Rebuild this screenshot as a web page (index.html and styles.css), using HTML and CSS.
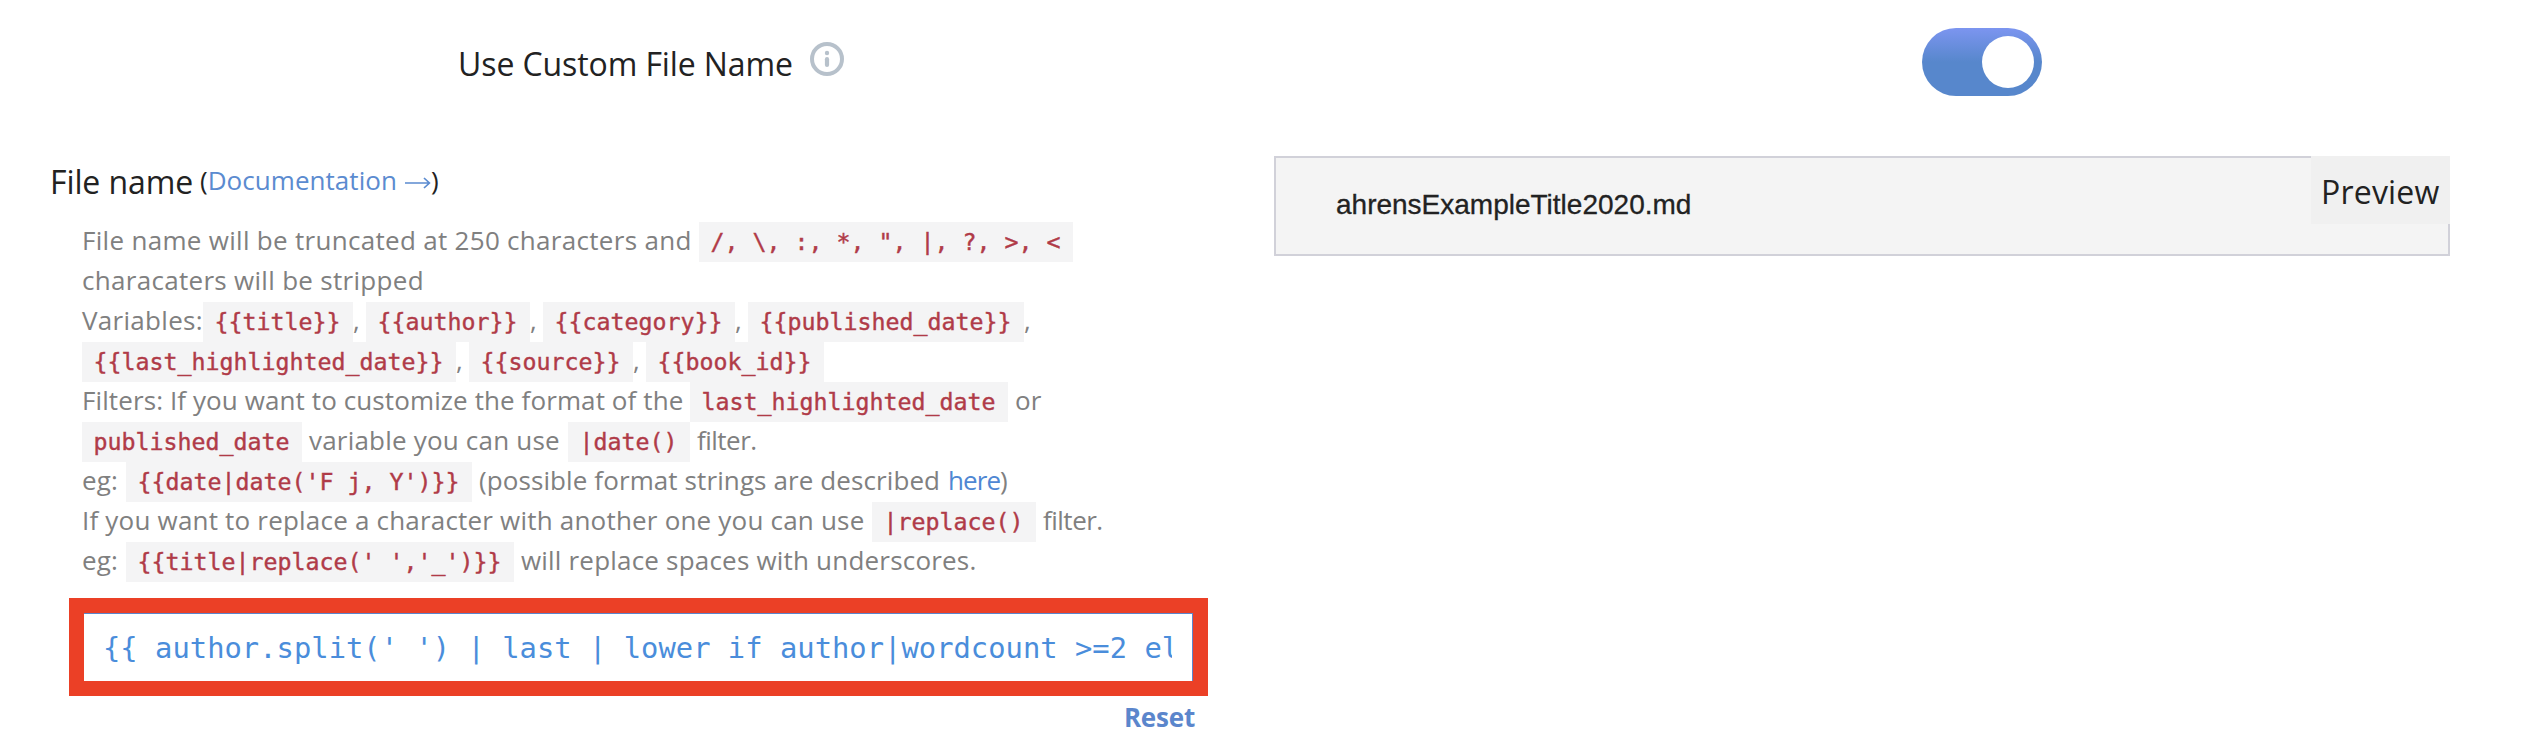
FILE: index.html
```html
<!DOCTYPE html>
<html lang="en">
<head>
<meta charset="utf-8">
<title>Custom File Name</title>
<link rel="stylesheet" href="styles.css">
</head>
<body>
<main class="settings">
  <header class="toggle-row">
    <div class="toggle-label">
      <span class="title">Use Custom File Name</span>
      <svg class="info" viewBox="0 0 34 34" fill="none" stroke="#b7c1cb">
        <circle cx="17" cy="17" r="15" stroke-width="4"/>
        <path d="M17 17.2v5.8" stroke-width="4.2" stroke-linecap="round"/>
        <circle cx="17" cy="11" r="2.2" fill="#b7c1cb" stroke="none"/>
      </svg>
    </div>
    <div class="switch"><span class="knob"></span></div>
  </header>
  <div class="columns">
    <section class="editor">
      <div class="heading"><span class="name">File name</span><span class="doc">(<a>Documentation</a><svg class="arrow" viewBox="0 0 26 14" fill="none" stroke="#5b8bd0" stroke-width="1.7"><path d="M0 7h24M19 2l5.4 5-5.4 5"/></svg>)</span></div>
      <div class="help">
        <p><span class="w-trunc loose">File name will be truncated at 250 characters and</span><code>/, \, :, *, ", |, ?, &gt;, &lt;</code></p>
        <p><span class="loose">characaters will be stripped</span></p>
        <p><span class="w-vars loose">Variables:</span><code>{{title}}</code><span class="comma">,</span><code>{{author}}</code><span class="comma">,</span><code>{{category}}</code><span class="comma">,</span><code>{{published_date}}</code><span class="comma">,</span></p>
        <p><code>{{last_highlighted_date}}</code><span class="comma">,</span><code>{{source}}</code><span class="comma">,</span><code>{{book_id}}</code></p>
        <p><span class="w-filters tight">Filters: If you want to customize the format of the</span><code>last_highlighted_date</code><span class="after">or</span></p>
        <p><code>published_date</code><span class="w-variable after">variable you can use</span><code>|date()</code><span class="after filter">filter.</span></p>
        <p><span class="w-eg">eg:</span><code>{{date|date('F j, Y')}}</code><span class="w-possible after tight">(possible format strings are described</span><a class="here">here</a><span>)</span></p>
        <p><span class="w-replace">If you want to replace a character with another one you can use</span><code>|replace()</code><span class="after filter">filter.</span></p>
        <p><span class="w-eg">eg:</span><code>{{title|replace(' ','_')}}</code><span class="after">will replace spaces with underscores.</span></p>
      </div>
      <div class="field"><div class="input"><span class="value">{{ author.split(' ') | last | lower if author|wordcount &gt;=2 el</span></div></div>
      <a class="reset">Reset</a>
    </section>
    <section class="preview">
      <span class="file">ahrensExampleTitle2020.md</span>
      <span class="badge">Preview</span>
    </section>
  </div>
</main>
</body>
</html>
```
FILE: styles.css
```css
* { box-sizing: border-box; }
body {
  margin: 0;
  background: #fff;
  color: #222;
  font-family: "Open Sans", "Noto Sans", sans-serif;
}
.settings { width: 2536px; height: 742px; overflow: hidden; }

.toggle-row { display: flex; height: 156px; }
.toggle-label { display: flex; width: 1922px; padding-left: 458px; }
.title {
  width: 352px;
  padding-top: 42px;
  font-size: 32px;
  line-height: 44px;
  letter-spacing: -0.1px;
  white-space: nowrap;
}
.info { width: 34px; height: 34px; margin-top: 42px; }
.switch {
  display: flex;
  justify-content: flex-end;
  width: 120px;
  height: 68px;
  margin-top: 28px;
  padding: 8px;
  border-radius: 34px;
  background: linear-gradient(#7c95f0, #5787cc 50%);
}
.knob { width: 52px; height: 52px; border-radius: 50%; background: #fff; }

.columns { display: flex; align-items: flex-start; }
.editor { width: 1274px; }
.heading {
  display: flex;
  height: 66px;
  padding: 3px 0 0 50px;
  white-space: nowrap;
}
.name { width: 150px; font-size: 32px; line-height: 46px; letter-spacing: -0.1px; }
.doc { font-size: 26px; line-height: 43px; }
.doc a { color: #5b8bd0; letter-spacing: 0.05px; }
.arrow { width: 26px; height: 14px; margin: 0 0 0 8px; }

.help { padding-left: 82px; color: #808080; font-size: 26px; letter-spacing: 0.2px; }
.help p { display: flex; height: 40px; margin: 0; line-height: 36px; white-space: nowrap; }
.help code {
  flex: none;
  height: 40px;
  padding: 0 12.5px 0 11.5px;
  background: #f4f4f5;
  color: #b03b48;
  font-family: "DejaVu Sans Mono", monospace;
  font-size: 23.25px;
  line-height: 40px;
  letter-spacing: 0;
  -webkit-text-stroke: 0.4px #b03b48;
}
.help .loose { letter-spacing: 0.3px; }
.help .tight { letter-spacing: 0.1px; }
.comma { width: 13px; }
.help .after { padding-left: 7px; }
.help .filter { letter-spacing: -0.5px; }
.w-trunc { width: 617px; }
.w-vars { width: 121px; }
.w-filters { width: 608px; }
.w-variable { width: 266px; }
.w-eg { width: 44px; }
.w-possible { width: 476px; }
.w-replace { width: 790px; }
.here { width: 52px; color: #4f87d3; letter-spacing: -0.9px; }

.field {
  width: 1139px;
  height: 98px;
  margin: 16px 0 0 69px;
  padding: 15px;
  background: #eb4026;
}
.input {
  height: 68px;
  padding: 0 20px 0 19px;
  border-top: 1px solid #5b86cc;
  border-right: 1px solid #5b86cc;
  background: #fff;
}
.value {
  display: block;
  overflow: hidden;
  color: #4a8ddb;
  font-family: "DejaVu Sans Mono", monospace;
  font-size: 28.8px;
  line-height: 68px;
  letter-spacing: 0.02px;
  white-space: nowrap;
}
.reset {
  display: block;
  width: 1195px;
  color: #5b86cc;
  font-size: 26px;
  font-weight: 700;
  line-height: 42px;
  letter-spacing: -0.2px;
  text-align: right;
}

.preview {
  position: relative;
  width: 1176px;
  height: 100px;
  padding-left: 60px;
  border: 2px solid #d1d1d9;
  background: #f4f4f4;
}
.file {
  font-family: "Liberation Sans", Arial, sans-serif;
  font-size: 28px;
  line-height: 94px;
  -webkit-text-stroke: 0.3px #222;
}
.badge {
  position: absolute;
  top: -2px;
  right: -2px;
  width: 139px;
  height: 68px;
  padding-left: 10px;
  background: #f0f0f0;
  font-size: 32px;
  line-height: 72px;
  letter-spacing: 0.2px;
}
```
